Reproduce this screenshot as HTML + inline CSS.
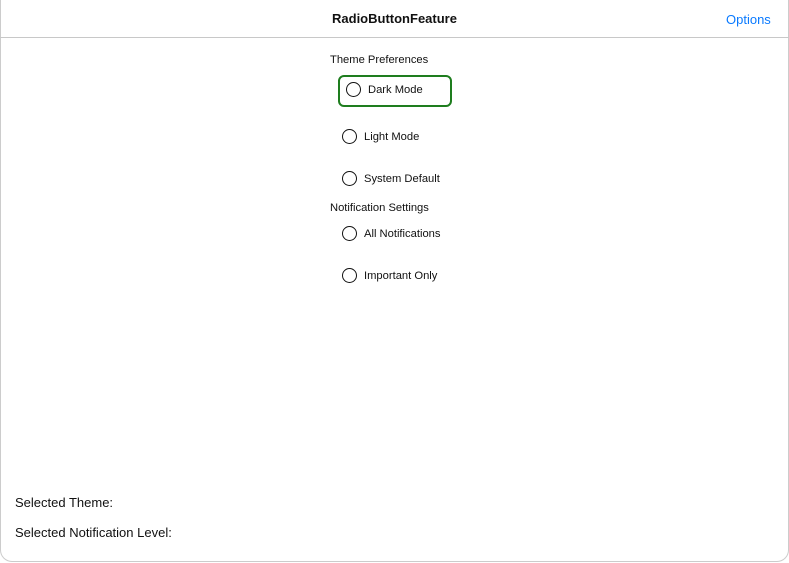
<!DOCTYPE html>
<html><head><style>
body{margin:0;width:789px;height:563px;background:#fff;font-family:"Liberation Sans",sans-serif;position:relative;overflow:hidden;color:#111}
.a{position:absolute;white-space:nowrap}
.c{position:absolute;width:13px;height:13px;border:1.5px solid #111;border-radius:50%}
.t{font-size:11.2px}
</style></head><body>
<div style="position:absolute;left:0;top:0;width:787px;height:561px;border:1px solid #ccc;border-top:none;border-radius:0 0 12px 12px"></div>
<div class="a" style="left:0;width:789px;top:11px;text-align:center;font-size:13px;font-weight:bold">RadioButtonFeature</div>
<div class="a" style="left:726px;top:12px;font-size:13px;color:#0a7aff">Options</div>
<div style="position:absolute;left:0;top:37px;width:789px;height:1px;background:#c8c8c8"></div>
<div class="a t" style="left:330px;top:54px">Theme Preferences</div>
<div style="position:absolute;left:338px;top:75px;width:110px;height:28px;border:2px solid #1e7d1e;border-radius:6px"></div>
<div class="c" style="left:346px;top:82px"></div><div class="a t" style="left:368px;top:84px">Dark Mode</div>
<div class="c" style="left:342px;top:129px"></div><div class="a t" style="left:364px;top:131px">Light Mode</div>
<div class="c" style="left:342px;top:171px"></div><div class="a t" style="left:364px;top:173px">System Default</div>
<div class="a t" style="left:330px;top:202px">Notification Settings</div>
<div class="c" style="left:342px;top:226px"></div><div class="a t" style="left:364px;top:228px">All Notifications</div>
<div class="c" style="left:342px;top:268px"></div><div class="a t" style="left:364px;top:270px">Important Only</div>
<div class="a" style="left:15px;top:495px;font-size:13px">Selected Theme:</div>
<div class="a" style="left:15px;top:525px;font-size:13px">Selected Notification Level:</div>
</body></html>
